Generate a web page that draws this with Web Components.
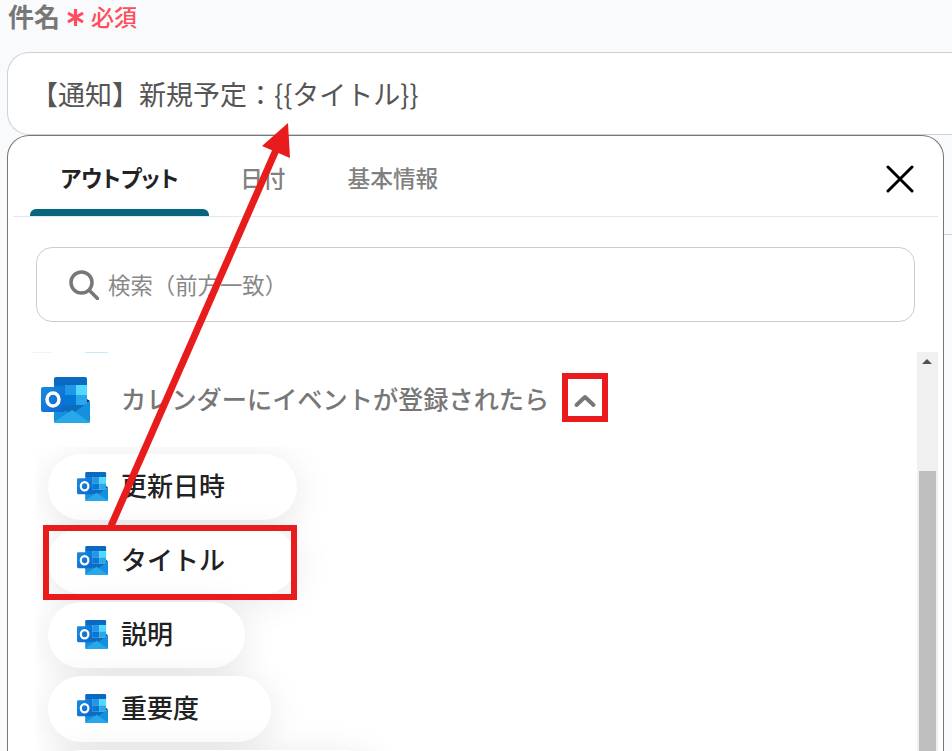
<!DOCTYPE html>
<html lang="ja">
<head>
<meta charset="utf-8">
<title>件名</title>
<style>
    html, body {
        margin: 0;
        height: 751px;
        overflow: hidden;
        background: #f9fafb;
        font-family: "Noto Sans CJK JP", "Noto Sans", sans-serif;
    }
</style>
</head>
<body>
<subject-field>
    <output-panel>
        <output-group title="カレンダーにイベントが登録されたら">
            <token-pill>更新日時</token-pill>
            <token-pill>タイトル</token-pill>
            <token-pill>説明</token-pill>
            <token-pill>重要度</token-pill>
            <token-pill style="width: 330px"></token-pill>
        </output-group>
    </output-panel>
</subject-field>
<callout-marks></callout-marks>

<script>
class OutlookIcon extends HTMLElement {
    constructor() {
        super();
        this.attachShadow({ mode: 'open' });
    }

    connectedCallback() {
        this.shadowRoot.innerHTML = `
            <style>
                :host { display: block; flex: none; width: var(--size, 49px); }
                svg { display: block; width: 100%; height: auto; }
            </style>
            <svg viewBox="0 0 49 46">
                <defs>
                    <linearGradient id="o" x1="0" y1="0" x2="1" y2="1">
                        <stop offset="0" stop-color="#1a8ae0"/>
                        <stop offset="1" stop-color="#0a66cc"/>
                    </linearGradient>
                </defs>
                <path d="M13 2a2 2 0 0 1 2-2h29a2 2 0 0 1 2 2v6H13z" fill="#0a6ac2"/>
                <rect x="13" y="8" width="11" height="10" fill="#0078d4"/>
                <rect x="24" y="8" width="11" height="10" fill="#1f96e6"/>
                <rect x="35" y="8" width="11" height="10" fill="#50d9ff"/>
                <rect x="13" y="18" width="11" height="10" fill="#0364b8"/>
                <rect x="24" y="18" width="11" height="10" fill="#0078d4"/>
                <rect x="35" y="18" width="11" height="10" fill="#28a8ea"/>
                <rect x="13" y="28" width="33" height="8" fill="#0f6cbd"/>
                <path d="M46 22l3 2-3 2z" fill="#0a2767"/>
                <path d="M13 28l18 9 18-13v20a2 2 0 0 1-2 2H15a2 2 0 0 1-2-2z" fill="#1490df"/>
                <path d="M13 45l18-12 18 12.500a2 2 0 0 1-2 .5H15a2 2 0 0 1-2-1z" fill="#28a8ea"/>
                <rect x="0" y="10" width="24" height="25" rx="2" fill="url(#o)"/>
                <ellipse cx="12" cy="22.500" rx="6" ry="6.500" fill="none" stroke="#fff" stroke-width="3.500"/>
            </svg>
        `;
    }
}

class TokenPill extends HTMLElement {
    constructor() {
        super();
        this.attachShadow({ mode: 'open' });
    }

    connectedCallback() {
        this.shadowRoot.innerHTML = `
            <style>
                :host {
                    display: flex;
                    align-items: center;
                    gap: 13px;
                    flex: none;
                    width: fit-content;
                    height: 66px;
                    box-sizing: border-box;
                    padding: 0 72px 0 29px;
                    border-radius: 33px;
                    background: #fff;
                    box-shadow: 0 6px 36px rgba(0, 0, 0, 0.1);
                    color: #222;
                    font-size: 26px;
                    font-weight: 500;
                    white-space: nowrap;
                    --size: 31px;
                }
                span { margin-bottom: 5px; }
            </style>
            <outlook-icon></outlook-icon>
            <span><slot></slot></span>
        `;
    }
}

class OutputGroup extends HTMLElement {
    constructor() {
        super();
        this.attachShadow({ mode: 'open' });
    }

    connectedCallback() {
        this.shadowRoot.innerHTML = `
            <style>
                :host { display: block; }
                .head {
                    display: flex;
                    align-items: center;
                    height: 94px;
                    padding-left: 5px;
                    color: #777;
                    font-size: 25.200px;
                    font-weight: 500;
                }
                .head span { margin-left: 31px; margin-bottom: 5px; white-space: nowrap; }
                .head svg { margin-left: 22px; width: 28px; height: 16px; }
                .pills {
                    display: flex;
                    flex-direction: column;
                    gap: 8px;
                    height: 304px;
                    box-sizing: border-box;
                    overflow: hidden;
                    padding: 7px 60px 0 12px;
                }
            </style>
            <div class="head">
                <outlook-icon></outlook-icon>
                <span>${this.getAttribute('title')}</span>
                <svg viewBox="0 0 28 16"><path d="M5.500 13L14 5l8.500 8" fill="none" stroke="#777" stroke-width="4" stroke-linecap="round" stroke-linejoin="round"/></svg>
            </div>
            <div class="pills"><slot></slot></div>
        `;
    }
}

class OutputPanel extends HTMLElement {
    constructor() {
        super();
        this.attachShadow({ mode: 'open' });
    }

    connectedCallback() {
        this.shadowRoot.innerHTML = `
            <style>
                :host {
                    display: block;
                    width: 937px;
                    height: 616px;
                    flex: none;
                    box-sizing: border-box;
                    background: #fff;
                    border: 1px solid #777;
                    border-bottom: 0;
                    border-radius: 22px 22px 0 0;
                    padding: 0 5px;
                }
                .tabs {
                    display: flex;
                    align-items: stretch;
                    height: 81px;
                    box-sizing: border-box;
                    border-bottom: 1px solid #e5e7eb;
                    padding-left: 17px;
                    font-size: 22.700px;
                    font-weight: 500;
                    color: #808080;
                    font-feature-settings: "palt";
                }
                .tab {
                    position: relative;
                    display: flex;
                    align-items: center;
                    padding: 2px 31px 0;
                    white-space: nowrap;
                }
                .tab.on {
                    padding: 2px 30.500px 0;
                    color: #222;
                    font-size: 22.200px;
                    font-weight: 700;
                }
                .tab.on::after {
                    content: "";
                    position: absolute;
                    left: 0;
                    right: 0;
                    bottom: 0;
                    height: 7px;
                    background: #06667f;
                    border-radius: 6px 6px 0 0;
                }
                .close { margin: 6px 24px 0 auto; align-self: center; width: 28px; height: 28px; }
                .search {
                    display: flex;
                    align-items: center;
                    gap: 9px;
                    height: 75px;
                    box-sizing: border-box;
                    margin: 30px 23px;
                    padding-left: 32px;
                    border: 1px solid #ccc;
                    border-radius: 16px;
                    color: #888;
                    font-size: 22.400px;
                }
                .search svg { width: 30px; height: 30px; flex: none; }
                .search span { margin-bottom: 1px; }
                .list {
                    position: relative;
                    height: 399px;
                    padding-left: 23px;
                    overflow: hidden;
                }
                .sliver {
                    height: 1px;
                    background: linear-gradient(90deg, #fff 0 2px, #f3f3f3 2px 22px, #fff 22px 55px, #cdeafa 55px 78px, #fff 78px);
                    width: 100%;
                    margin-left: -6px;
                }
                .bar {
                    position: absolute;
                    top: 0;
                    right: 0;
                    bottom: 0;
                    width: 21px;
                    background: #f0f0f0;
                }
                .bar::before {
                    content: "";
                    position: absolute;
                    left: 5px;
                    top: 7px;
                    border: 5px solid transparent;
                    border-top: 0;
                    border-bottom: 5px solid #505050;
                }
                .bar::after {
                    content: "";
                    position: absolute;
                    left: 2px;
                    right: 2px;
                    top: 119px;
                    bottom: 0;
                    background: #bebebe;
                }
            </style>
            <div class="tabs">
                <div class="tab on">アウトプット</div>
                <div class="tab">日付</div>
                <div class="tab">基本情報</div>
                <svg class="close" viewBox="0 0 28 28"><path d="M2 2l24 24M26 2L2 26" stroke="#000" stroke-width="3" stroke-linecap="round"/></svg>
            </div>
            <div class="search">
                <svg viewBox="0 0 30 30" fill="none" stroke="#777" stroke-width="3.500" stroke-linecap="round"><circle cx="12.500" cy="12.500" r="10.500"/><path d="M21 21l7.500 7.500"/></svg>
                <span>検索（前方一致）</span>
            </div>
            <div class="list">
                <div class="bar"></div>
                <div class="sliver"></div>
                <slot></slot>
            </div>
        `;
    }
}

class SubjectField extends HTMLElement {
    constructor() {
        super();
        this.attachShadow({ mode: 'open' });
    }

    connectedCallback() {
        this.shadowRoot.innerHTML = `
            <style>
                :host { display: block; }
                .label {
                    display: flex;
                    align-items: center;
                    height: 32px;
                    line-height: 32px;
                    margin-bottom: 20px;
                    padding-left: 8px;
                    color: #777;
                    font-size: 26px;
                    font-weight: 700;
                }
                .star { margin-left: 6px; width: 19px; height: 19px; margin-top: 3px; }
                .req { margin-left: 6px; color: #ff4d5e; font-size: 23px; font-weight: 500; }
                .input {
                    display: flex;
                    align-items: center;
                    height: 83px;
                    box-sizing: border-box;
                    margin-left: 7px;
                    padding: 0 0 0 23px;
                    background: #fff;
                    border: 1px solid #cbd2da;
                    border-right: 0;
                    border-radius: 22px 0 0 22px;
                    color: #555;
                    font-size: 27px;
                    white-space: nowrap;
                }
                .row { display: flex; margin-left: 7px; }
                .edge {
                    flex: 1;
                    height: 516px;
                    margin-top: 99px;
                    border-top: 1px solid #cbd2da;
                }
            </style>
            <div class="label">
                <span>件名</span>
                <svg class="star" viewBox="0 0 19 19"><path d="M9.500 1v17M2 5l15 9M17 5L2 14" stroke="#ff4d5e" stroke-width="3.200"/></svg>
                <span class="req">必須</span>
            </div>
            <div class="input">【通知】新規予定：{{タイトル}}</div>
            <div class="row">
                <slot></slot>
                <div class="edge"></div>
            </div>
        `;
    }
}

class CalloutMarks extends HTMLElement {
    constructor() {
        super();
        this.attachShadow({ mode: 'open' });
    }

    connectedCallback() {
        this.shadowRoot.innerHTML = `
            <style>
                :host { position: absolute; inset: 0; display: block; pointer-events: none; }
                svg { display: block; }
            </style>
            <svg width="952" height="751" viewBox="0 0 952 751">
                <g fill="none" stroke="#e81c1c" stroke-width="6">
                    <rect x="565" y="376" width="40" height="43"/>
                    <rect x="46" y="528" width="248" height="69"/>
                </g>
                <path d="M111 526L276 150" fill="none" stroke="#e81c1c" stroke-width="7"/>
                <path d="M288 123L262 146L290 158z" fill="#e81c1c"/>
            </svg>
        `;
    }
}

customElements.define('outlook-icon', OutlookIcon);
customElements.define('token-pill', TokenPill);
customElements.define('output-group', OutputGroup);
customElements.define('output-panel', OutputPanel);
customElements.define('subject-field', SubjectField);
customElements.define('callout-marks', CalloutMarks);
</script>
</body>
</html>
